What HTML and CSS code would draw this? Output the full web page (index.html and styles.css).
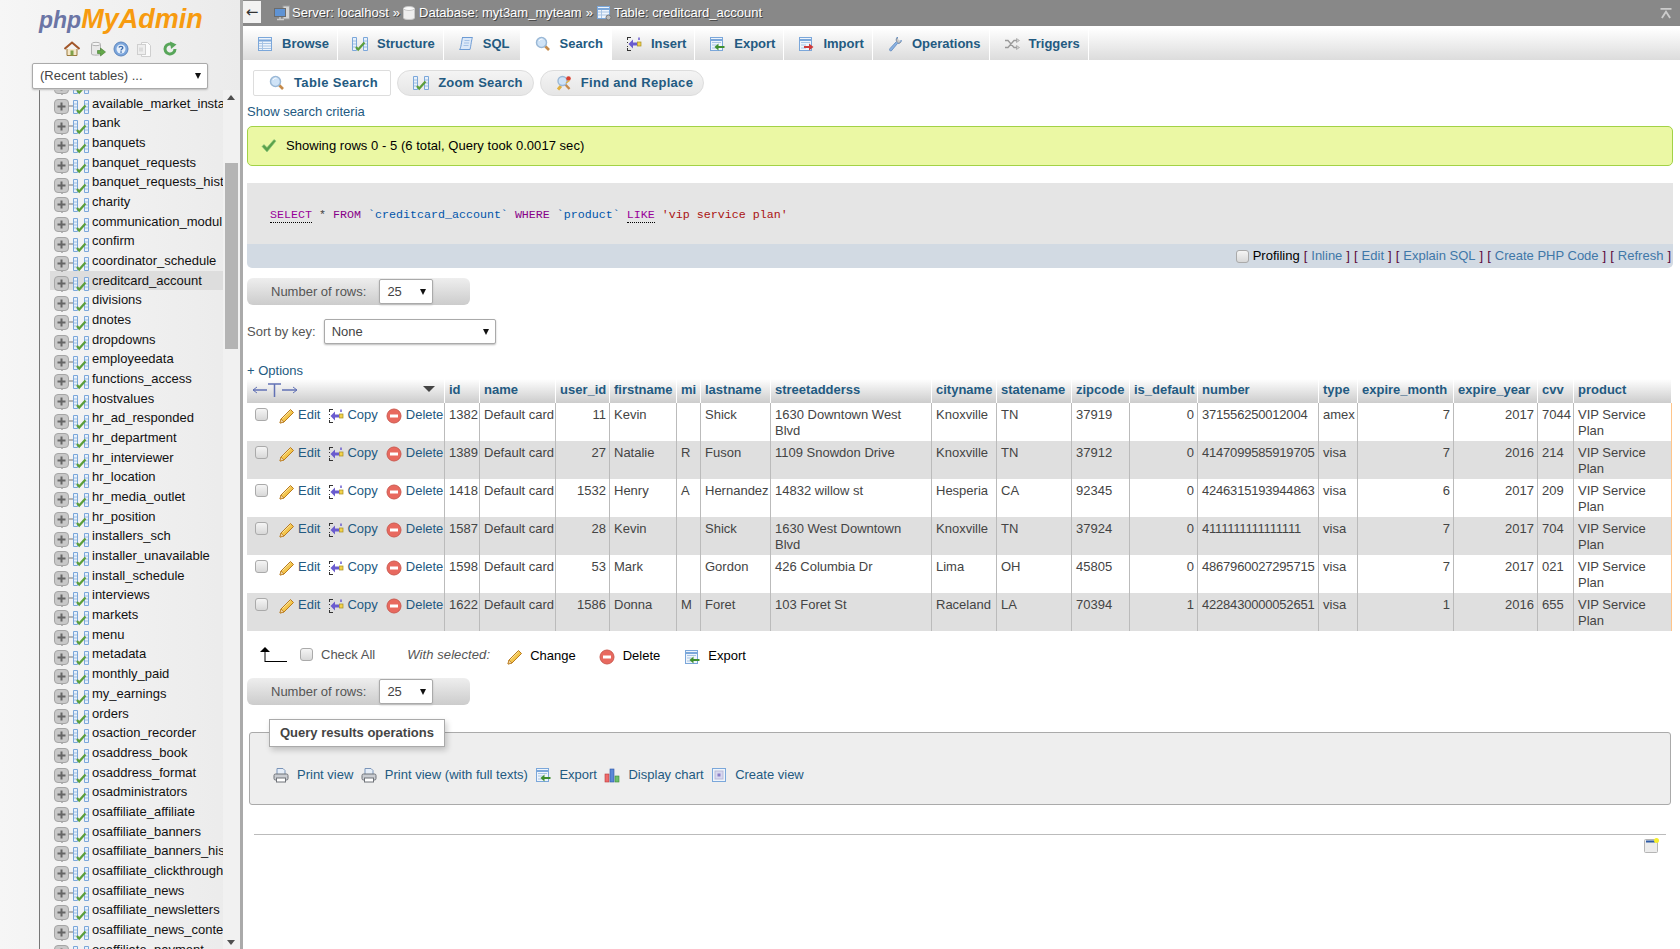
FILE: index.html
```html
<!DOCTYPE html>
<html lang="en">
<head>
<meta charset="utf-8">
<title>phpMyAdmin</title>
<link rel="stylesheet" href="styles.css">
</head>
<body>
<svg class="defs" width="0" height="0" aria-hidden="true">
<defs>
<symbol id="i-struct" viewBox="0 0 16 16"><path d="M.5 1.5h4v13h-4zM11.5 1.5h4v13h-4z" fill="#e8f1fb" stroke="#7ba7da"/><path d="M1 5h3M1 8h3M1 11h3M12 5h3M12 8h3M12 11h3" stroke="#9dbde0"/><path d="M4 11l2.2 2.6L12.5 6.5" fill="none" stroke="#5b9e3a" stroke-width="2.2"/></symbol>
<symbol id="i-row" viewBox="0 0 38 16"><path d="M8-7v28" stroke="#777" fill="none"/><path d="M15 7h4" stroke="#777"/><rect x=".5" y=".5" width="14" height="14" rx="3.5" fill="#c8c8c8" stroke="#a5a5a5"/><path d="M3.5 7.5h8M7.500 3.500v8" stroke="#666" stroke-width="2"/><use href="#i-struct" x="19" y="0" width="16" height="16"/></symbol>
<symbol id="i-browse" viewBox="0 0 16 16"><rect x="1.500" y="1.500" width="13" height="13" fill="#eef4fb" stroke="#7ba7da"/><path d="M2 4.500h12" stroke="#7ba7da" stroke-width="2"/><path d="M2 7.500h12M2 10h12M2 12.500h12M5.500 5v9" stroke="#a8c4e4"/></symbol>
<symbol id="i-sql" viewBox="0 0 16 16"><path d="M4 1.500h10.500c-1 2-1.500 8-2.500 12H1.500c1.500-1 2-8 3-12z" fill="#dbe8f8" stroke="#6d9bd4"/><path d="M6.500 4.500h5M6 7h5M5.500 9.500h5" stroke="#a3c1e6"/></symbol>
<symbol id="i-search" viewBox="0 0 16 16"><path d="M9.500 9.500l4.500 4.500" stroke="#c58a4a" stroke-width="2.600"/><circle cx="6.500" cy="6.500" r="5" fill="#cfe3f7" stroke="#9ab8d6" stroke-width="1.500"/><path d="M4 5c.8-1.400 2-2 3.500-1.800" stroke="#fff" fill="none"/></symbol>
<symbol id="i-copy" viewBox="0 0 16 16"><path d="M1 1.500h4M1 14.500h4M1.500 2v2M1.500 6v1M1.500 10v1M1.500 12v2" stroke="#333" fill="none"/><path d="M11 8H5" stroke="#6a5ccf" stroke-width="3"/><path d="M7 3.500L2.500 8 7 12.500z" fill="#6a5ccf"/><rect x="11.500" y="6" width="3.500" height="4" fill="#f2d24a" stroke="#a58d20" stroke-width=".7"/><path d="M13 1.500v2.500" stroke="#6a5ccf" stroke-width="1.500"/></symbol>
<symbol id="i-export" viewBox="0 0 16 16"><rect x="1.500" y="1.500" width="12" height="13" fill="#eef4fb" stroke="#7ba7da"/><path d="M2 4h11" stroke="#7ba7da" stroke-width="2"/><path d="M3 6.500h9M3 9h5M3 12h5" stroke="#a8c4e4"/><path d="M15.500 11H8" stroke="#3e8e2e" stroke-width="2"/><path d="M9.500 7.500L5.500 11l4 3.500z" fill="#3e8e2e"/></symbol>
<symbol id="i-import" viewBox="0 0 16 16"><rect x="1.500" y="1.500" width="12" height="13" fill="#eef4fb" stroke="#7ba7da"/><path d="M2 4h11" stroke="#7ba7da" stroke-width="2"/><path d="M3 6.500h9M3 9h5M3 12h5" stroke="#a8c4e4"/><path d="M6 11h6" stroke="#cf3a3a" stroke-width="2"/><path d="M11 7.500l4.500 3.500-4.500 3.500z" fill="#cf3a3a"/></symbol>
<symbol id="i-ops" viewBox="0 0 16 16"><path d="M10.500 1c-1.500 1-1.500 3-1 4.500L3 12.500c-1 1.200-.5 2.500 1.200 2.500l6.300-7.500c1.500.3 3.500-.5 4-3l-2.500 1-1.500-1.500z" fill="#8ab2e2" stroke="#5c86bd" stroke-width=".8"/><path d="M10 2c-.8 1-.6 2.500-.2 3.500l1.700 1.500 2.500-.8" fill="#c9c9c9" stroke="#888" stroke-width=".6"/></symbol>
<symbol id="i-triggers" viewBox="0 0 16 16"><path d="M1 4.500h3l6 7h3M1 11.500h3l6-7h3" fill="none" stroke="#9a9a9a" stroke-width="1.300"/><path d="M12.500 2.500l3 2-3 2zM12.500 9.500l3 2-3 2z" fill="#cfcfcf" stroke="#888" stroke-width=".5"/></symbol>
<symbol id="i-replace" viewBox="0 0 16 16"><path d="M8 8l5.500 6" stroke="#c58a4a" stroke-width="2.400"/><path d="M5 11l-3 3.500" stroke="#e0b040" stroke-width="3"/><circle cx="6.500" cy="6" r="4.500" fill="#cfe3f7" stroke="#9ab8d6" stroke-width="1.400"/><circle cx="12.500" cy="3.500" r="2.300" fill="#d8402f"/><path d="M10 8l3.500-2.500" stroke="#e0b040" stroke-width="1.500"/></symbol>
<symbol id="i-tick" viewBox="0 0 16 16"><path d="M1 8.500l5 5.500 9-11-2-1.500-7 8-3-3z" fill="#5aa24a" stroke="#8cc47e" stroke-width=".6"/></symbol>
<symbol id="i-pencil" viewBox="0 0 16 16"><path d="M11.500 1.500L14.500 4.500 5 14 1 15 2 11z" fill="#f3c54d" stroke="#b97a1d"/><path d="M3.500 10.500L11.500 2.800" stroke="#fbe9a9"/><path d="M2 11l-1 4 4-1z" fill="#f0d6a8" stroke="#b97a1d" stroke-width=".7"/></symbol>
<symbol id="i-delete" viewBox="0 0 16 16"><circle cx="8" cy="8" r="7" fill="#e8695f" stroke="#cc5b51"/><rect x="4" y="6.500" width="8" height="3" fill="#fff"/></symbol>
<symbol id="i-print" viewBox="0 0 16 16"><path d="M4 7V1.500h6L12 3.500V7" fill="#e6eef8" stroke="#7a94b8"/><rect x="1" y="7" width="14" height="6" rx="1.500" fill="#c9ccd1" stroke="#6f7379"/><rect x="3.500" y="11" width="9" height="4" fill="#fff" stroke="#6f7379"/></symbol>
<symbol id="i-chart" viewBox="0 0 16 16"><rect x="1" y="7" width="4" height="8" fill="#ee6b6b" stroke="#b83a3a" stroke-width=".6"/><rect x="6" y="2" width="4" height="13" fill="#5b88d8" stroke="#2d55a5" stroke-width=".6"/><rect x="11" y="9" width="4" height="6" fill="#6ec06a" stroke="#39863a" stroke-width=".6"/></symbol>
<symbol id="i-view" viewBox="0 0 16 16"><rect x="1.500" y="1.500" width="13" height="13" fill="#eef4fb" stroke="#7ba7da"/><rect x="4" y="4" width="8" height="8" fill="#d8d8ef" stroke="#b9b9d8"/><rect x="6.500" y="6.500" width="3" height="3" fill="#8a7fc7"/></symbol>
<symbol id="i-home" viewBox="0 0 16 16"><path d="M3 8v6.500h10V8" fill="#f5e7c8" stroke="#9b7a3f"/><path d="M.5 8L8 1.500 15.500 8" fill="none" stroke="#a2572a" stroke-width="2"/><rect x="6.500" y="9.500" width="3" height="5" fill="#7fa14b"/></symbol>
<symbol id="i-dbgo" viewBox="0 0 16 16"><path d="M1.500 3v10c0 1.500 9 1.500 9 0V3" fill="#e9e9e9" stroke="#b3b3b3"/><ellipse cx="6" cy="3" rx="4.500" ry="1.700" fill="#f5f5f5" stroke="#b3b3b3"/><path d="M7.500 9.500h3V7l5 4-5 4v-2.500h-3z" fill="#63a84a" stroke="#437a2f" stroke-width=".6"/></symbol>
<symbol id="i-help" viewBox="0 0 16 16"><circle cx="8" cy="8" r="7" fill="#7ca6dc" stroke="#5d86bd"/><circle cx="8" cy="8" r="4.500" fill="#e6effa"/><path d="M6 6.500C6.300 5 9.800 5 9.800 6.800 9.800 8 8 8 8 9.500" fill="none" stroke="#3f6fb0" stroke-width="1.400"/><rect x="7.300" y="10.300" width="1.500" height="1.500" fill="#3f6fb0"/></symbol>
<symbol id="i-docs" viewBox="0 0 16 16"><path d="M5.500 1.500h6l3 3v11h-9z" fill="#fbfbfb" stroke="#cfcfcf"/><rect x="1.500" y="3.500" width="8" height="10" fill="#eee" stroke="#cfcfcf"/><path d="M4 6.500v4M6 6.500v4" stroke="#c9c9c9"/></symbol>
<symbol id="i-refresh" viewBox="0 0 16 16"><path d="M13 8a5 5 0 1 1-2-4" fill="none" stroke="#58a65a" stroke-width="3"/><path d="M8 .5l6.500 3L9 8z" fill="#58a65a"/></symbol>
<symbol id="i-server" viewBox="0 0 16 16"><rect x="9" y="1" width="6.500" height="13" fill="#d5d5d5" stroke="#9c9c9c"/><rect x=".5" y="3.500" width="11" height="8" fill="#5f93d4" stroke="#6b6b6b"/><path d="M3 14.500h7M6 12v2" stroke="#ccc" stroke-width="1.400"/></symbol>
<symbol id="i-db" viewBox="0 0 16 16"><path d="M2.500 3.500v9.500c0 2 11 2 11 0V3.500" fill="#eee" stroke="#c8c8c8"/><ellipse cx="8" cy="3.500" rx="5.500" ry="2" fill="#fafafa" stroke="#c8c8c8"/></symbol>
<symbol id="i-tablegear" viewBox="0 0 16 16"><rect x="1.500" y="1.500" width="12" height="12" fill="#eef4fb" stroke="#7ba7da"/><path d="M2 4h11" stroke="#7ba7da" stroke-width="2"/><path d="M2 7h11M2 10h11M5.500 5v8" stroke="#a8c4e4"/><circle cx="12.500" cy="12.500" r="2.500" fill="#bbb" stroke="#777"/></symbol>
<symbol id="i-sticky" viewBox="0 0 16 16"><rect x=".5" y="1.500" width="13" height="13" rx="1" fill="#ececec" stroke="#b5b5b5"/><path d="M2 3.500h9" stroke="#2d5aa5" stroke-width="2"/><circle cx="12.500" cy="2.500" r="2.500" fill="#f5ee2c"/></symbol>
</defs>
</svg>

<div class="page">
<aside class="sidebar">
  <div class="logo"><span class="logo-php">php</span><span class="logo-my">MyAdmin</span></div>
  <div class="nav-icons">
    <svg class="ico"><use href="#i-home"/></svg>
    <svg class="ico"><use href="#i-dbgo"/></svg>
    <svg class="ico"><use href="#i-help"/></svg>
    <svg class="ico"><use href="#i-docs"/></svg>
    <svg class="ico"><use href="#i-refresh"/></svg>
  </div>
  <div class="select select-recent">(Recent tables) ...</div>
  <div class="tree-area">
    <div class="tree">
      <ul class="tree-list">
        <li class="tree-row"><svg class="ico-row"><use href="#i-row"/></svg></li>
        <li class="tree-row"><svg class="ico-row"><use href="#i-row"/></svg><span>available_market_insta</span></li>
        <li class="tree-row"><svg class="ico-row"><use href="#i-row"/></svg><span>bank</span></li>
        <li class="tree-row"><svg class="ico-row"><use href="#i-row"/></svg><span>banquets</span></li>
        <li class="tree-row"><svg class="ico-row"><use href="#i-row"/></svg><span>banquet_requests</span></li>
        <li class="tree-row"><svg class="ico-row"><use href="#i-row"/></svg><span>banquet_requests_hist</span></li>
        <li class="tree-row"><svg class="ico-row"><use href="#i-row"/></svg><span>charity</span></li>
        <li class="tree-row"><svg class="ico-row"><use href="#i-row"/></svg><span>communication_modul</span></li>
        <li class="tree-row"><svg class="ico-row"><use href="#i-row"/></svg><span>confirm</span></li>
        <li class="tree-row"><svg class="ico-row"><use href="#i-row"/></svg><span>coordinator_schedule</span></li>
        <li class="tree-row is-current"><svg class="ico-row"><use href="#i-row"/></svg><span>creditcard_account</span></li>
        <li class="tree-row"><svg class="ico-row"><use href="#i-row"/></svg><span>divisions</span></li>
        <li class="tree-row"><svg class="ico-row"><use href="#i-row"/></svg><span>dnotes</span></li>
        <li class="tree-row"><svg class="ico-row"><use href="#i-row"/></svg><span>dropdowns</span></li>
        <li class="tree-row"><svg class="ico-row"><use href="#i-row"/></svg><span>employeedata</span></li>
        <li class="tree-row"><svg class="ico-row"><use href="#i-row"/></svg><span>functions_access</span></li>
        <li class="tree-row"><svg class="ico-row"><use href="#i-row"/></svg><span>hostvalues</span></li>
        <li class="tree-row"><svg class="ico-row"><use href="#i-row"/></svg><span>hr_ad_responded</span></li>
        <li class="tree-row"><svg class="ico-row"><use href="#i-row"/></svg><span>hr_department</span></li>
        <li class="tree-row"><svg class="ico-row"><use href="#i-row"/></svg><span>hr_interviewer</span></li>
        <li class="tree-row"><svg class="ico-row"><use href="#i-row"/></svg><span>hr_location</span></li>
        <li class="tree-row"><svg class="ico-row"><use href="#i-row"/></svg><span>hr_media_outlet</span></li>
        <li class="tree-row"><svg class="ico-row"><use href="#i-row"/></svg><span>hr_position</span></li>
        <li class="tree-row"><svg class="ico-row"><use href="#i-row"/></svg><span>installers_sch</span></li>
        <li class="tree-row"><svg class="ico-row"><use href="#i-row"/></svg><span>installer_unavailable</span></li>
        <li class="tree-row"><svg class="ico-row"><use href="#i-row"/></svg><span>install_schedule</span></li>
        <li class="tree-row"><svg class="ico-row"><use href="#i-row"/></svg><span>interviews</span></li>
        <li class="tree-row"><svg class="ico-row"><use href="#i-row"/></svg><span>markets</span></li>
        <li class="tree-row"><svg class="ico-row"><use href="#i-row"/></svg><span>menu</span></li>
        <li class="tree-row"><svg class="ico-row"><use href="#i-row"/></svg><span>metadata</span></li>
        <li class="tree-row"><svg class="ico-row"><use href="#i-row"/></svg><span>monthly_paid</span></li>
        <li class="tree-row"><svg class="ico-row"><use href="#i-row"/></svg><span>my_earnings</span></li>
        <li class="tree-row"><svg class="ico-row"><use href="#i-row"/></svg><span>orders</span></li>
        <li class="tree-row"><svg class="ico-row"><use href="#i-row"/></svg><span>osaction_recorder</span></li>
        <li class="tree-row"><svg class="ico-row"><use href="#i-row"/></svg><span>osaddress_book</span></li>
        <li class="tree-row"><svg class="ico-row"><use href="#i-row"/></svg><span>osaddress_format</span></li>
        <li class="tree-row"><svg class="ico-row"><use href="#i-row"/></svg><span>osadministrators</span></li>
        <li class="tree-row"><svg class="ico-row"><use href="#i-row"/></svg><span>osaffiliate_affiliate</span></li>
        <li class="tree-row"><svg class="ico-row"><use href="#i-row"/></svg><span>osaffiliate_banners</span></li>
        <li class="tree-row"><svg class="ico-row"><use href="#i-row"/></svg><span>osaffiliate_banners_his</span></li>
        <li class="tree-row"><svg class="ico-row"><use href="#i-row"/></svg><span>osaffiliate_clickthrough</span></li>
        <li class="tree-row"><svg class="ico-row"><use href="#i-row"/></svg><span>osaffiliate_news</span></li>
        <li class="tree-row"><svg class="ico-row"><use href="#i-row"/></svg><span>osaffiliate_newsletters</span></li>
        <li class="tree-row"><svg class="ico-row"><use href="#i-row"/></svg><span>osaffiliate_news_conte</span></li>
        <li class="tree-row"><svg class="ico-row"><use href="#i-row"/></svg><span>osaffiliate_payment</span></li>
      </ul>
    </div>
    <div class="scrollbar">
      <span class="sb-up"></span>
      <span class="sb-thumb"></span>
      <span class="sb-down"></span>
    </div>
  </div>
</aside>

<div class="divider"></div>

<main class="main">
  <header class="topbar">
    <span class="back">←</span>
    <svg class="ico top-ico-server"><use href="#i-server"/></svg><span class="crumb">Server: localhost</span><span class="sep">»</span>
    <svg class="ico top-ico-db"><use href="#i-db"/></svg><span class="crumb">Database: myt3am_myteam</span><span class="sep">»</span>
    <svg class="ico top-ico-table"><use href="#i-tablegear"/></svg><span class="crumb">Table: creditcard_account</span>
    <svg class="collapse" viewBox="0 0 12 12"><path d="M0 1h12M1.500 11L6 4l4.500 7" fill="none" stroke="#ccc" stroke-width="2"/></svg>
  </header>

  <nav class="tabs">
    <a class="tab"><svg class="ico"><use href="#i-browse"/></svg>Browse</a>
    <a class="tab"><svg class="ico"><use href="#i-struct"/></svg>Structure</a>
    <a class="tab tab-sql"><svg class="ico"><use href="#i-sql"/></svg>SQL</a>
    <a class="tab is-active"><svg class="ico"><use href="#i-search"/></svg>Search</a>
    <a class="tab"><svg class="ico"><use href="#i-copy"/></svg>Insert</a>
    <a class="tab"><svg class="ico"><use href="#i-export"/></svg>Export</a>
    <a class="tab"><svg class="ico"><use href="#i-import"/></svg>Import</a>
    <a class="tab"><svg class="ico"><use href="#i-ops"/></svg>Operations</a>
    <a class="tab"><svg class="ico"><use href="#i-triggers"/></svg>Triggers</a>
  </nav>

  <nav class="subtabs">
    <a class="subtab is-active"><svg class="ico"><use href="#i-search"/></svg>Table Search</a>
    <a class="subtab"><svg class="ico"><use href="#i-struct"/></svg>Zoom Search</a>
    <a class="subtab"><svg class="ico"><use href="#i-replace"/></svg>Find and Replace</a>
  </nav>

  <div class="content">
    <a class="criteria">Show search criteria</a>
    <div class="success"><svg class="ico"><use href="#i-tick"/></svg>Showing rows 0 - 5 (6 total, Query took 0.0017 sec)</div>

    <div class="sql"><code><span class="kw-doc">SELECT</span> * <span class="kw">FROM</span> <span class="sym">`creditcard_account`</span> <span class="kw">WHERE</span> <span class="sym">`product`</span> <span class="kw-doc">LIKE</span> <span class="str">'vip service plan'</span></code></div>
    <div class="sql-tools"><input class="check" type="checkbox"><span class="prof">Profiling</span> <b>[</b> <a>Inline</a> <b>]</b> <b>[</b> <a>Edit</a> <b>]</b> <b>[</b> <a>Explain SQL</a> <b>]</b> <b>[</b> <a>Create PHP Code</a> <b>]</b> <b>[</b> <a>Refresh</a> <b>]</b></div>

    <div class="rows-bar"><span>Number of rows:</span><div class="select select-rows">25</div></div>

    <div class="sort"><span>Sort by key:</span><div class="select select-sort">None</div></div>

    <a class="options">+ Options</a>

    <table class="results">
      <colgroup>
        <col class="c1"><col class="c2"><col class="c3"><col class="c4"><col class="c5"><col class="c6"><col class="c7"><col class="c8"><col class="c9"><col class="c10"><col class="c11"><col class="c12"><col class="c13"><col class="c14"><col class="c15"><col class="c16"><col class="c17"><col class="c18">
      </colgroup>
      <thead>
        <tr>
          <th class="th-actions"><svg class="t-arrows" viewBox="0 0 46 16"><path d="M1 8h14M16 2h13M22.500 2v13M30 8h15" fill="none" stroke="#6272b5" stroke-width="1.500"/><path d="M5 5L1 8l4 3M41 5l4 3-4 3" fill="none" stroke="#6272b5"/></svg><span class="sort-tri"></span></th>
          <th>id</th><th>name</th><th>user_id</th><th>firstname</th><th>mi</th><th>lastname</th><th>streetadderss</th><th>cityname</th><th>statename</th><th>zipcode</th><th>is_default</th><th>number</th><th>type</th><th>expire_month</th><th>expire_year</th><th>cvv</th><th>product</th>
        </tr>
      </thead>
      <tbody>
        <tr>
          <td><div class="acts"><input class="check" type="checkbox"><svg class="ico a-edit"><use href="#i-pencil"/></svg><a>Edit</a><svg class="ico a-copy"><use href="#i-copy"/></svg><a>Copy</a><svg class="ico a-del"><use href="#i-delete"/></svg><a>Delete</a></div></td>
          <td>1382</td><td>Default card</td><td class="num">11</td><td>Kevin</td><td></td><td>Shick</td><td>1630 Downtown West Blvd</td><td>Knoxville</td><td>TN</td><td>37919</td><td class="num">0</td><td>371556250012004</td><td>amex</td><td class="num">7</td><td class="num">2017</td><td>7044</td><td>VIP Service Plan</td>
        </tr>
        <tr>
          <td><div class="acts"><input class="check" type="checkbox"><svg class="ico a-edit"><use href="#i-pencil"/></svg><a>Edit</a><svg class="ico a-copy"><use href="#i-copy"/></svg><a>Copy</a><svg class="ico a-del"><use href="#i-delete"/></svg><a>Delete</a></div></td>
          <td>1389</td><td>Default card</td><td class="num">27</td><td>Natalie</td><td>R</td><td>Fuson</td><td>1109 Snowdon Drive</td><td>Knoxville</td><td>TN</td><td>37912</td><td class="num">0</td><td>4147099585919705</td><td>visa</td><td class="num">7</td><td class="num">2016</td><td>214</td><td>VIP Service Plan</td>
        </tr>
        <tr>
          <td><div class="acts"><input class="check" type="checkbox"><svg class="ico a-edit"><use href="#i-pencil"/></svg><a>Edit</a><svg class="ico a-copy"><use href="#i-copy"/></svg><a>Copy</a><svg class="ico a-del"><use href="#i-delete"/></svg><a>Delete</a></div></td>
          <td>1418</td><td>Default card</td><td class="num">1532</td><td>Henry</td><td>A</td><td>Hernandez</td><td>14832 willow st</td><td>Hesperia</td><td>CA</td><td>92345</td><td class="num">0</td><td>4246315193944863</td><td>visa</td><td class="num">6</td><td class="num">2017</td><td>209</td><td>VIP Service Plan</td>
        </tr>
        <tr>
          <td><div class="acts"><input class="check" type="checkbox"><svg class="ico a-edit"><use href="#i-pencil"/></svg><a>Edit</a><svg class="ico a-copy"><use href="#i-copy"/></svg><a>Copy</a><svg class="ico a-del"><use href="#i-delete"/></svg><a>Delete</a></div></td>
          <td>1587</td><td>Default card</td><td class="num">28</td><td>Kevin</td><td></td><td>Shick</td><td>1630 West Downtown Blvd</td><td>Knoxville</td><td>TN</td><td>37924</td><td class="num">0</td><td>4111111111111111</td><td>visa</td><td class="num">7</td><td class="num">2017</td><td>704</td><td>VIP Service Plan</td>
        </tr>
        <tr>
          <td><div class="acts"><input class="check" type="checkbox"><svg class="ico a-edit"><use href="#i-pencil"/></svg><a>Edit</a><svg class="ico a-copy"><use href="#i-copy"/></svg><a>Copy</a><svg class="ico a-del"><use href="#i-delete"/></svg><a>Delete</a></div></td>
          <td>1598</td><td>Default card</td><td class="num">53</td><td>Mark</td><td></td><td>Gordon</td><td>426 Columbia Dr</td><td>Lima</td><td>OH</td><td>45805</td><td class="num">0</td><td>4867960027295715</td><td>visa</td><td class="num">7</td><td class="num">2017</td><td>021</td><td>VIP Service Plan</td>
        </tr>
        <tr>
          <td><div class="acts"><input class="check" type="checkbox"><svg class="ico a-edit"><use href="#i-pencil"/></svg><a>Edit</a><svg class="ico a-copy"><use href="#i-copy"/></svg><a>Copy</a><svg class="ico a-del"><use href="#i-delete"/></svg><a>Delete</a></div></td>
          <td>1622</td><td>Default card</td><td class="num">1586</td><td>Donna</td><td>M</td><td>Foret</td><td>103 Foret St</td><td>Raceland</td><td>LA</td><td>70394</td><td class="num">1</td><td>4228430000052651</td><td>visa</td><td class="num">1</td><td class="num">2016</td><td>655</td><td>VIP Service Plan</td>
        </tr>
      </tbody>
    </table>

    <div class="bulk">
      <svg class="bulk-arrow" viewBox="0 0 27 16"><path d="M5 15.500h22M5 16V3" fill="none" stroke="#000"/><path d="M0 6l5-5 5 5z" fill="#000"/></svg>
      <input class="check" type="checkbox">
      <span class="check-all">Check All</span>
      <i class="with">With selected:</i>
      <svg class="ico b-first"><use href="#i-pencil"/></svg><span class="b-lab b-change">Change</span>
      <svg class="ico b-del"><use href="#i-delete"/></svg><span class="b-lab">Delete</span>
      <svg class="ico b-exp"><use href="#i-export"/></svg><span class="b-lab">Export</span>
    </div>

    <div class="rows-bar rows-bar-low"><span>Number of rows:</span><div class="select select-rows">25</div></div>

    <section class="ops">
      <h3 class="ops-title">Query results operations</h3>
      <a class="op"><svg class="ico"><use href="#i-print"/></svg>Print view</a>
      <a class="op"><svg class="ico"><use href="#i-print"/></svg>Print view (with full texts)</a>
      <a class="op"><svg class="ico"><use href="#i-export"/></svg>Export</a>
      <a class="op"><svg class="ico"><use href="#i-chart"/></svg>Display chart</a>
      <a class="op"><svg class="ico"><use href="#i-view"/></svg>Create view</a>
    </section>

    <hr class="rule">
    <div class="foot-icon"><svg class="ico"><use href="#i-sticky"/></svg></div>
  </div>
</main>
</div>
</body>
</html>
```
FILE: styles.css
```css
* { box-sizing: border-box; }
html, body { margin: 0; height: 100%; overflow: hidden; }
body { font: 13px/16px "Liberation Sans", Arial, sans-serif; color: #444; background: #fff; }
a { color: #235a81; text-decoration: none; }
ul { list-style: none; margin: 0; padding: 0; }
.defs { position: absolute; }
.ico { width: 16px; height: 16px; flex: none; display: block; }

.page { display: flex; height: 949px; }
.sidebar { width: 240px; flex: none; display: flex; flex-direction: column; background: linear-gradient(to right, #f6f6f6, #ebebeb); overflow: hidden; }
.divider { width: 3px; flex: none; background: #aaa; }
.main { flex: 1; min-width: 0; display: flex; flex-direction: column; }

.logo { height: 41px; padding: 3px 0 0 39px; font: italic bold 27px/32px "Liberation Sans", Arial, sans-serif; white-space: nowrap; }
.logo-php { color: #6b75a5; font-size: 23px; }
.logo-my { color: #f79b0f; }
.nav-icons { height: 22px; padding-left: 64px; display: flex; gap: 7px; }
.nav-icons .ico:nth-child(1), .nav-icons .ico:nth-child(4) { margin-right: 3px; }

.select { position: relative; background: #fff; border: 1px solid #aaa; border-radius: 2px; box-shadow: 0 1px 2px #bbb; color: #444; white-space: nowrap; }
.select::after { content: ""; position: absolute; top: 50%; margin-top: -3px; right: 6px; border: 3.5px solid transparent; border-top: 6px solid #111; border-bottom: 0; }
.select-recent { margin-left: 32px; width: 176px; height: 26px; padding: 4px 0 0 7px; flex: none; position: relative; z-index: 1; }
.select-rows { width: 54px; height: 25px; padding: 4px 0 0 7px; margin-left: 13px; }
.select-sort { width: 172px; height: 25px; padding: 4px 0 0 7px; margin-left: 8px; }

.tree-area { flex: 1; min-height: 0; display: flex; margin-top: 1px; }
.tree { flex: 1; min-width: 0; overflow: hidden; padding-left: 39px; }
.tree-list { margin-top: -16px; border-left: 1px solid #777; }
.tree-row { display: flex; height: 19.68px; line-height: 19.68px; margin-left: 10px; padding-left: 4px; color: #111; white-space: nowrap; }
.ico-row { width: 38px; height: 16px; flex: none; overflow: visible; margin: 5.25px 0 0 0; }
.is-current { background: #ddd; }
.scrollbar { width: 17px; flex: none; position: relative; background: #f1f1f1; }
.sb-thumb { position: absolute; left: 2px; top: 73px; width: 13px; height: 186px; background: #b4b4b4; }
.sb-up, .sb-down { position: absolute; left: 4px; border: 4px solid transparent; border-left-width: 4.500px; border-right-width: 4.500px; }
.sb-up { top: 5px; border-bottom: 5px solid #505050; border-top: 0; }
.sb-down { bottom: 4px; border-top: 5px solid #505050; border-bottom: 0; }

.topbar { height: 26px; margin-bottom: 2px; flex: none; background: #888; display: flex; align-items: center; color: #fff; white-space: nowrap; text-shadow: 1px 1px 0 #444; }
.back { width: 18px; height: 22px; margin-bottom: 2px; background: #f2f2f2; color: #333; text-align: center; font: 15px/22px "DejaVu Sans", sans-serif; text-shadow: none; }
.top-ico-server { margin-left: 13px; margin-right: 2px; }
.top-ico-db { margin-left: 1px; margin-right: 2px; }
.top-ico-table { margin-left: 3px; margin-right: 2px; }
.sep { margin-left: 4px; }
.collapse { width: 12px; height: 11px; margin-left: auto; margin-right: 8px; }

.tabs { height: 32px; flex: none; display: flex; background: linear-gradient(#fff, #dcdcdc); }
.tab { display: flex; align-items: center; gap: 9px; padding: 0 8px 0 14px; border-right: 1px solid #fff; font-weight: bold; white-space: nowrap; }
.tab-sql { padding-right: 10px; }
.tab.is-active { background: #fff; }

.subtabs { display: flex; gap: 6px; height: 26px; margin: 10px 0 0 10px; flex: none; }
.subtab { display: flex; align-items: center; gap: 9px; padding: 0 10px 0 15px; border: 1px solid #ddd; border-radius: 13px; background: linear-gradient(#f4f4f4, #e6e6e6); font-weight: bold; letter-spacing: .3px; white-space: nowrap; }
.subtab:nth-child(2) { letter-spacing: .2px; }
.subtab.is-active { background: #fff; border-radius: 2px; padding-right: 12px; letter-spacing: .35px; }

.content { flex: 1; min-height: 0; padding: 0 7px 0 4px; }
.criteria { display: block; margin-top: 8px; }
.success { display: flex; align-items: center; gap: 9px; height: 40px; margin-top: 6px; padding-left: 13px; background: #ebf8a4; border: 1px solid #a2d246; border-radius: 5px; color: #000; letter-spacing: .04px; }

.sql { height: 61px; margin-top: 17px; padding: 23px 0 0 23px; background: #e5e5e5; line-height: 16px; }
.sql code { font: 11.67px/16px "Liberation Mono", "Courier New", monospace; color: #444; }
.kw-doc { color: #909; border-bottom: 1px dotted #000; }
.kw { color: #808; }
.sym { color: #05a; }
.str { color: #a11; }
.sql-tools { height: 24px; display: flex; justify-content: flex-end; align-items: center; gap: 4px; padding-right: 2px; background: #d2dae3; border-radius: 0 0 5px 5px; color: #000; white-space: pre; }
.sql-tools a { color: #3f77a8; }
.sql-tools b { font-weight: normal; color: #5a0a3a; }
.prof { color: #000; }

.check { appearance: none; -webkit-appearance: none; width: 13px; height: 13px; margin: 0; flex: none; border: 1px solid #aaa; border-radius: 3px; background: linear-gradient(#f5f5f5, #d8d8d8); }

.rows-bar { display: flex; align-items: flex-start; width: 223px; height: 27px; margin-top: 10px; padding: 1px 0 0 24px; border-radius: 6px; background: linear-gradient(#eee, #ccc); }
.rows-bar > span { padding-top: 5px; color: #555; }
.rows-bar-low { margin-top: 16px; }
.sort { display: flex; align-items: center; margin-top: 14px; color: #555; }
.options { display: block; margin-top: 19px; }

.results { table-layout: fixed; width: 1425px; border-collapse: separate; border-spacing: 0; }
.c1 { width: 198px; } .c2 { width: 35px; } .c3 { width: 76px; } .c4 { width: 54px; } .c5 { width: 67px; } .c6 { width: 24px; }
.c7 { width: 70px; } .c8 { width: 161px; } .c9 { width: 65px; } .c10 { width: 75px; } .c11 { width: 58px; } .c12 { width: 68px; }
.c13 { width: 121px; } .c14 { width: 39px; } .c15 { width: 96px; } .c16 { width: 84px; } .c17 { width: 36px; } .c18 { width: 98px; }
.results th { height: 24px; padding: 0 3px 2px 4px; text-align: left; font-weight: bold; color: #235a81; background: linear-gradient(#fff, #ccc); border-right: 1px solid #fff; white-space: nowrap; overflow: hidden; }
.results td { height: 38px; padding: 4px 3px 2px 4px; vertical-align: top; border-right: 1px solid #bbb; }
.results td:first-child { padding-left: 3px; white-space: nowrap; }
.results td:nth-child(2), .results td:nth-child(3) { white-space: nowrap; }
.results td:nth-child(13) { white-space: nowrap; letter-spacing: -.2px; }
.results tbody tr:nth-child(even) td { background: #dfdfdf; }
.results td:last-child { border-right-color: #ffc58a; }
.results td.num { text-align: right; }
.th-actions { position: relative; }
.t-arrows { display: block; width: 46px; height: 16px; margin-left: 1px; }
.sort-tri { position: absolute; right: 9px; top: 7px; border: 6px solid transparent; border-top: 6px solid #444; border-bottom: 0; }
.acts { display: flex; align-items: flex-start; padding-left: 5px; }
.acts .check { margin-top: 1px; }
.acts .ico { margin-top: 1px; }
.a-edit { margin: 0 3px 0 11px; }
.a-copy { margin: 0 3px 0 8px; }
.a-del { margin: 0 4px 0 8px; }

.bulk { display: flex; align-items: center; height: 16px; margin-top: 15px; }
.bulk-arrow { width: 27px; height: 16px; flex: none; margin-left: 13px; overflow: visible; }
.bulk .check { margin-left: 13px; }
.check-all { margin-left: 8px; color: #555; position: relative; top: 1px; }
.with { margin-left: 32px; color: #555; position: relative; top: 1px; letter-spacing: .1px; }
.b-first { margin-left: 17px; }
.b-del { margin-left: 23px; }
.b-exp { margin-left: 24px; }
.b-lab { margin-left: 8px; color: #000; position: relative; top: 2px; }
.b-change { margin-left: 7px; }
.bulk .ico { position: relative; top: 3px; }

.ops { position: relative; display: flex; align-items: center; gap: 7.5px; height: 73px; margin: 27px 2px 0 2px; padding: 12px 0 0 23px; background: #eee; border: 1px solid #aaa; border-radius: 3px; }
.op { display: flex; align-items: center; gap: 8px; white-space: nowrap; }
.ops-title { position: absolute; left: 19px; top: -14px; margin: 0; height: 28px; padding: 0 10px; font-size: 13px; line-height: 26px; font-weight: bold; color: #444; background: #fff; border: 1px solid #aaa; box-shadow: 2px 3px 6px rgba(0,0,0,.2); }

.rule { height: 0; margin: 29px 7px 0 7px; border: 0; border-top: 1px solid #bbb; }
.foot-icon { display: flex; justify-content: flex-end; padding: 3px 13px 0 0; }
```
